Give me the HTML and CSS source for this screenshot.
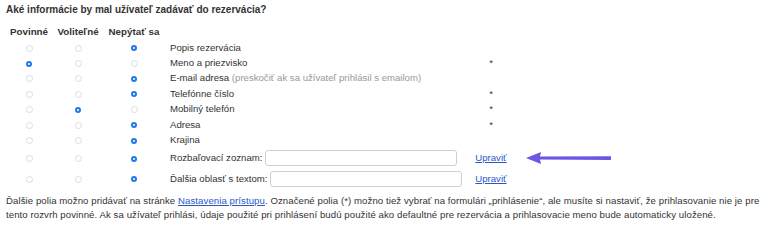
FILE: index.html
```html
<!DOCTYPE html>
<html lang="sk">
<head>
<meta charset="utf-8">
<link rel="stylesheet" href="styles.css">
</head>
<body>
<div class="page">
  <h3 class="title">Aké informácie by mal užívateľ zadávať do rezervácia?</h3>
  <table class="fields">
    <thead>
      <tr><th class="c1">Povinné</th><th class="c2">Voliteľné</th><th class="c3">Nepýtať sa</th><th></th><th></th></tr>
    </thead>
    <tbody>
      <tr><td><span class="r"></span></td><td><span class="r"></span></td><td><span class="r on"></span></td><td class="lbl">Popis rezervácia</td><td class="ex"></td></tr>
      <tr><td><span class="r on"></span></td><td><span class="r"></span></td><td><span class="r"></span></td><td class="lbl">Meno a priezvisko</td><td class="ex">*</td></tr>
      <tr><td><span class="r"></span></td><td><span class="r"></span></td><td><span class="r on"></span></td><td class="lbl">E-mail adresa <span class="hint">(preskočiť ak sa užívateľ prihlásil s emailom)</span></td><td class="ex"></td></tr>
      <tr><td><span class="r"></span></td><td><span class="r"></span></td><td><span class="r on"></span></td><td class="lbl">Telefónne číslo</td><td class="ex">*</td></tr>
      <tr><td><span class="r"></span></td><td><span class="r on"></span></td><td><span class="r"></span></td><td class="lbl">Mobilný telefón</td><td class="ex">*</td></tr>
      <tr><td><span class="r"></span></td><td><span class="r"></span></td><td><span class="r on"></span></td><td class="lbl">Adresa</td><td class="ex">*</td></tr>
      <tr><td><span class="r"></span></td><td><span class="r"></span></td><td><span class="r on"></span></td><td class="lbl">Krajina</td><td class="ex"></td></tr>
      <tr class="inrow"><td><span class="r"></span></td><td><span class="r"></span></td><td><span class="r on"></span></td><td class="lbl">Rozbaľovací zoznam: <input class="txt" type="text"></td><td class="ex"><a href="#">Upraviť</a><span class="arrow"><svg width="88" height="14" viewBox="0 0 88 14"><path d="M0 7 L15 1 L14 5.6 L85 5.3 L85 8.9 L14 8.4 L15 13 Z" fill="#6f55e6"/></svg></span></td></tr>
      <tr class="inrow"><td><span class="r"></span></td><td><span class="r"></span></td><td><span class="r on"></span></td><td class="lbl">Ďalšia oblasť s textom: <input class="txt" type="text"></td><td class="ex"><a href="#">Upraviť</a></td></tr>
    </tbody>
  </table>
  <p class="note">Ďalšie polia možno pridávať na stránke <a href="#">Nastavenia prístupu</a>. Označené polia (*) možno tiež vybrať na formulári „prihlásenie“, ale musíte si nastaviť, že prihlasovanie nie je pre tento rozvrh povinné. Ak sa užívateľ prihlási, údaje použité pri prihlásení budú použité ako defaultné pre rezervácia a prihlasovacie meno bude automaticky uložené.</p>
</div>
</body>
</html>
```
FILE: styles.css
```css
html, body { margin: 0; padding: 0; background: #fff; }
body {
  font-family: "Liberation Sans", Arial, sans-serif;
  font-size: 9.6px;
  color: #333;
}
.page { padding: 3px 6px 0 6px; }
.title {
  margin: 0;
  font-size: 10px;
  font-weight: bold;
  color: #333;
  line-height: 14px;
}
.fields {
  border-collapse: collapse;
  margin-top: 8px;
}
.fields th {
  font-weight: bold;
  font-size: 9.8px;
  color: #333;
  padding: 0 0 2px 0;
  text-align: center;
  line-height: 13px;
}
.fields th.c1 { width: 46px; }
.fields th.c2 { width: 52px; }
.fields th.c3 { width: 60px; }
.fields td {
  padding: 0;
  height: 15.4px;
  text-align: center;
  vertical-align: middle;
  line-height: 12px;
}
.fields td.lbl {
  text-align: left;
  padding-left: 6px;
  width: 304px;
}
.fields td.ex {
  width: 34px;
  text-align: center;
  position: relative;
  font-size: 9.6px;
}
.fields tr.inrow td { height: 20.6px; }
.hint { color: #999; }
.r {
  display: inline-block;
  width: 5px;
  height: 5px;
  border: 0.6px solid #dcdcdc;
  border-radius: 50%;
  box-sizing: content-box;
  vertical-align: middle;
}
.r.on {
  width: 2px;
  height: 2px;
  border: 2px solid #1f7ae8;
  background: #fff;
}
.txt {
  width: 190px;
  height: 14px;
  border: 1px solid #cfcfcf;
  border-radius: 3px;
  padding: 0;
  margin: 0;
  vertical-align: middle;
  box-sizing: content-box;
}
a { color: #2a58c8; text-decoration: underline; }
.arrow {
  position: absolute;
  left: 52px;
  top: 50%;
  margin-top: -7px;
  line-height: 0;
}
.note {
  margin: 5px 0 0 0;
  line-height: 14px;
  font-size: 9.6px;
  letter-spacing: 0.08px;
  color: #333;
}
```
